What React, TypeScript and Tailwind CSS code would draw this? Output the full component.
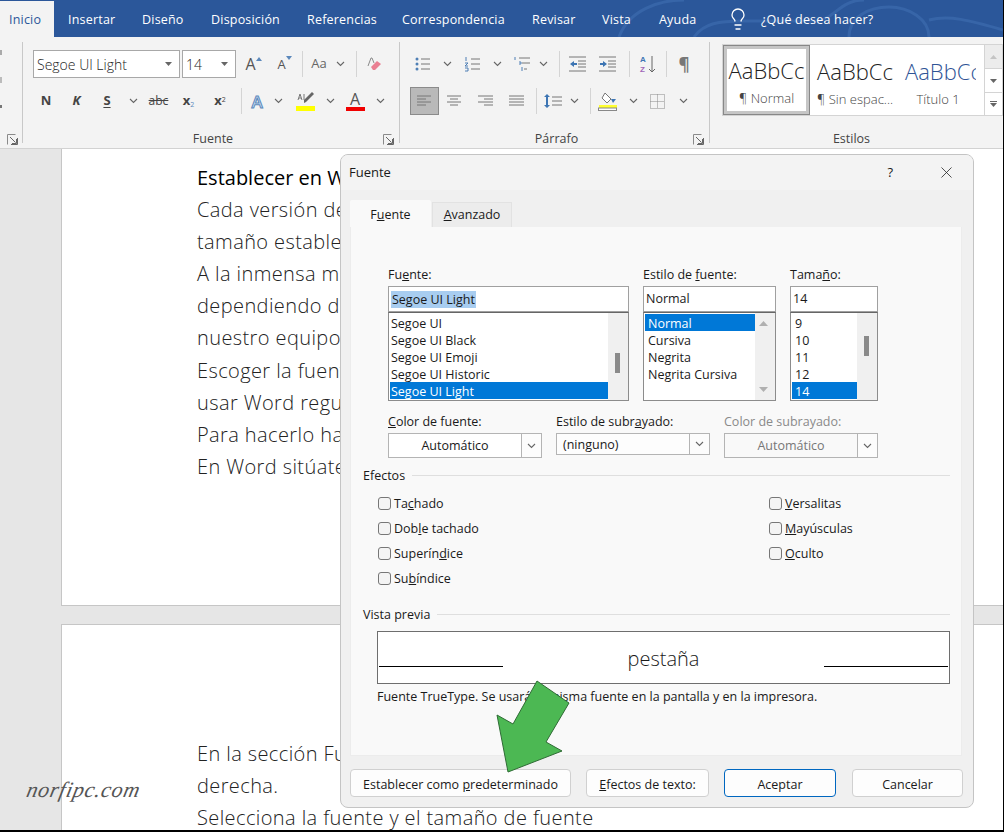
import { ReactNode } from 'react'
import { Lightbulb, X } from 'lucide-react'

const tabs = [
  { label: 'Insertar', w: 'w-[74px]' },
  { label: 'Diseño', w: 'w-[69px]' },
  { label: 'Disposición', w: 'w-[96px]' },
  { label: 'Referencias', w: 'w-[95px]' },
  { label: 'Correspondencia', w: 'w-[130px]' },
  { label: 'Revisar', w: 'w-[70px]' },
  { label: 'Vista', w: 'w-[57px]' },
  { label: 'Ayuda', w: 'w-[70px]' },
]

const page1 = [
  'Cada versión de',
  'tamaño estable',
  'A la inmensa m',
  'dependiendo d',
  'nuestro equipo',
  'Escoger la fuent',
  'usar Word regu',
  'Para hacerlo ha',
  'En Word sitúate',
]

function Chev({ className = '' }: { className?: string }) {
  return (
    <svg width="9" height="6" viewBox="0 0 9 6" className={className}>
      <path d="M1 1l3.5 3.5L8 1" fill="none" stroke="#666" strokeWidth="1.1" />
    </svg>
  )
}

function Cell({ w, children }: { w: string; children?: ReactNode }) {
  return <div className={`flex h-full shrink-0 items-center justify-center ${w}`}>{children}</div>
}

function ChevCell({ w }: { w: string }) {
  return (
    <Cell w={w}>
      <Chev />
    </Cell>
  )
}

function Sep({ w }: { w: string }) {
  return (
    <Cell w={w}>
      <div className="h-[26px] w-px bg-[#d4d4d4]" />
    </Cell>
  )
}

function Launcher() {
  return (
    <svg width="11" height="11" viewBox="0 0 11 11" className="mb-[-2px] shrink-0">
      <path d="M.5 10.5V.5h8" fill="none" stroke="#8a8a8a" />
      <path d="M3 3l5.5 5.5M9.5 5v4.5H5M10.5 4v6.5H4" fill="none" stroke="#666" />
    </svg>
  )
}

function GroupFooter({ label }: { label: string }) {
  return (
    <div className="mt-auto flex h-[22px] items-end pr-[5px]">
      <div className="mb-[-3px] flex-1 pl-[20px] text-center text-[12.5px] leading-[14px] text-[#444]">{label}</div>
      <Launcher />
    </div>
  )
}

// lines drawn for the paragraph icons
function Lines({ d, extra }: { d: string; extra?: ReactNode }) {
  return (
    <svg width="20" height="16" viewBox="0 0 20 16">
      <path d={d} fill="none" stroke="#777" strokeWidth="1" />
      {extra}
    </svg>
  )
}

function Select({ w, text }: { w: string; text: string }) {
  return (
    <div className={`flex h-[28px] shrink-0 items-center justify-between border border-[#a8a8a8] bg-white pl-[3px] pr-[7px] text-[14px] text-[#222] ${w}`}>
      <span className="font-light">{text}</span>
      <svg width="7" height="4" viewBox="0 0 7 4">
        <path d="M0 0h7L3.5 4z" fill="#666" />
      </svg>
    </div>
  )
}

function Ribbon() {
  return (
    <div className="flex h-[112px] shrink-0 border-b border-[#d2d2d2] bg-[#f3f3f3] pb-[5px] pt-[5px]">
      <div className="flex w-[23px] shrink-0 flex-col border-r border-[#c8c8c8]">
        <div className="mt-[8px] flex flex-col gap-[22px]">
          <div className="h-[5px] w-[2px] bg-[#aaa]" />
          <div className="h-[6px] w-[2px] bg-[#bbb]" />
          <div className="h-[3px] w-[2px] bg-[#777]" />
        </div>
        <div className="mt-auto flex justify-end pr-[4px]">
          <Launcher />
        </div>
      </div>

      <div className="flex w-[377px] shrink-0 flex-col border-r border-[#c8c8c8]">
        <div className="ml-[10px] mt-[8px] flex h-[28px] items-center">
          <Select w="w-[147px]" text="Segoe UI Light" />
          <div className="w-[2px] shrink-0" />
          <Select w="w-[54px]" text="14" />
          <Cell w="w-[29px]">
            <span className="relative text-[16px] leading-none text-[#555]">
              A
              <svg width="6" height="4" viewBox="0 0 6 4" className="absolute -right-[6px] top-[1px]">
                <path d="M3 0l3 4H0z" fill="#5b88bb" />
              </svg>
            </span>
          </Cell>
          <Cell w="w-[33px]">
            <span className="relative text-[13px] leading-none text-[#555]">
              A
              <svg width="6" height="4" viewBox="0 0 6 4" className="absolute -right-[6px] -top-[2px]">
                <path d="M3 4l3-4H0z" fill="#5b88bb" />
              </svg>
            </span>
          </Cell>
          <Sep w="w-[8px]" />
          <Cell w="w-[26px]">
            <span className="text-[13px] text-[#666]">Aa</span>
          </Cell>
          <ChevCell w="w-[16px]" />
          <Sep w="w-[16px]" />
          <Cell w="w-[20px]">
            <svg width="16" height="16" viewBox="0 0 16 16">
              <path d="M2 10L5 2h1l2 5" fill="none" stroke="#8a8a8a" />
              <path d="M5 11l6-6 4 3-6 6H7z" fill="#ea7f92" />
            </svg>
          </Cell>
        </div>
        <div className="ml-[8px] mt-[9px] flex h-[28px] items-center text-[13px] text-[#444]">
          <Cell w="w-[30px]"><b>N</b></Cell>
          <Cell w="w-[31px]"><b className="italic">K</b></Cell>
          <Cell w="w-[30px]"><b className="underline underline-offset-2">S</b></Cell>
          <ChevCell w="w-[22px]" />
          <Cell w="w-[29px]"><span className="text-[12px] line-through">abc</span></Cell>
          <Cell w="w-[31px]">
            <b>x<sub className="text-[7px] font-normal text-[#5b88bb]">2</sub></b>
          </Cell>
          <Cell w="w-[32px]">
            <b>x<sup className="text-[7px] font-normal">2</sup></b>
          </Cell>
          <Sep w="w-[10px]" />
          <Cell w="w-[22px]">
            <span className="text-[17px] font-semibold leading-none text-[#cfe2f5] [-webkit-text-stroke:1px_#5b88bb]">A</span>
          </Cell>
          <ChevCell w="w-[20px]" />
          <div className="w-[2px] shrink-0" />
          <Cell w="w-[30px]">
            <div className="flex w-[19px] flex-col items-center">
              <svg width="19" height="13" viewBox="0 0 19 13">
                <path d="M2 8l2-6 2 6M3 6h2M8 2v6" fill="none" stroke="#777" />
                <path d="M8 11l2-1 8-8-2-2-8 8z" fill="#666" />
              </svg>
              <div className="mt-[1px] h-[5px] w-[19px] bg-[#ffff00]" />
            </div>
          </Cell>
          <ChevCell w="w-[20px]" />
          <Cell w="w-[30px]">
            <div className="flex flex-col items-center">
              <span className="text-[16px] leading-[14px] text-[#555]">A</span>
              <div className="mt-[1px] h-[4px] w-[19px] bg-[#f00000]" />
            </div>
          </Cell>
          <ChevCell w="w-[20px]" />
        </div>
        <GroupFooter label="Fuente" />
      </div>

      <div className="flex w-[310px] shrink-0 flex-col border-r border-[#c8c8c8]">
        <div className="ml-[10px] mt-[8px] flex h-[28px] items-center">
          <Cell w="w-[25px]">
            <Lines
              d="M8 3h9M8 8h9M8 13h9"
              extra={
                <g fill="#4f7fb5">
                  <circle cx="4" cy="3" r="1.5" />
                  <circle cx="4" cy="8" r="1.5" />
                  <circle cx="4" cy="13" r="1.5" />
                </g>
              }
            />
          </Cell>
          <ChevCell w="w-[25px]" />
          <Cell w="w-[25px]">
            <Lines
              d="M8 3h9M8 8h9M8 13h9"
              extra={<path d="M3 1v4M2 7h3l-3 3h3M2 12h3v3H2" fill="none" stroke="#4f7fb5" strokeWidth="1" />}
            />
          </Cell>
          <ChevCell w="w-[25px]" />
          <Cell w="w-[23px]">
            <Lines
              d="M7 2h11M10 7h8M12 13h3"
              extra={<path d="M3 1v3M7 6h2v2H7M10 11v4" fill="none" stroke="#4f7fb5" strokeWidth="1" />}
            />
          </Cell>
          <ChevCell w="w-[20px]" />
          <Sep w="w-[12px]" />
          <Cell w="w-[25px]">
            <Lines
              d="M1 1h17M10 5h8M10 8h8M10 11h8M1 15h17"
              extra={<path d="M2 8l4-3v2h3v2H6v2z" fill="#3d75b3" />}
            />
          </Cell>
          <Cell w="w-[36px]">
            <Lines
              d="M1 1h17M10 5h8M10 8h8M10 11h8M1 15h17"
              extra={<path d="M9 8L5 5v2H2v2h3v2z" fill="#3d75b3" />}
            />
          </Cell>
          <Sep w="w-[6px]" />
          <Cell w="w-[32px]">
            <svg width="20" height="20" viewBox="0 0 20 20" className="font-['Liberation_Sans',sans-serif]">
              <text x="2" y="8" fontSize="8" fontWeight="700" fill="#3d75b3">A</text>
              <text x="2" y="18" fontSize="8" fontWeight="700" fill="#a066b8">Z</text>
              <path d="M14 2v16M11 15l3 3 3-3" fill="none" stroke="#666" />
            </svg>
          </Cell>
          <Sep w="w-[4px]" />
          <Cell w="w-[32px]">
            <span className="text-[17px] font-bold leading-none text-[#777]">¶</span>
          </Cell>
        </div>
        <div className="ml-[10px] mt-[9px] flex h-[28px] items-center">
          <Cell w="w-[29px] border border-[#8a8a8a] bg-[#b9b9b9]">
            <Lines d="M2 3h14M2 6h9M2 9h14M2 12h9" />
          </Cell>
          <Cell w="w-[30px]">
            <Lines d="M3 3h14M6 6h8M3 9h14M6 12h8" />
          </Cell>
          <Cell w="w-[32px]">
            <Lines d="M3 3h15M9 6h9M3 9h15M9 12h9" />
          </Cell>
          <Cell w="w-[30px]">
            <Lines d="M3 3h15M3 6h15M3 9h15M3 12h15" />
          </Cell>
          <Sep w="w-[10px]" />
          <Cell w="w-[24px]">
            <Lines
              d="M9 4h10M9 8h10M9 12h10"
              extra={<path d="M4 1l3 3H5v8h2l-3 3-3-3h2V4H1z" fill="#3d75b3" />}
            />
          </Cell>
          <ChevCell w="w-[18px]" />
          <Sep w="w-[14px]" />
          <Cell w="w-[22px]">
            <svg width="20" height="19" viewBox="0 0 20 19">
              <path d="M7 1l6 6-4 4-5-5z" fill="#fff" stroke="#777" />
              <path d="M13 7l5 0-3 4z" fill="#3d75b3" />
              <rect x="1" y="13" width="18" height="3" fill="#ffff30" />
              <rect x=".5" y="16" width="18" height="2.5" fill="#fff" stroke="#888" />
            </svg>
          </Cell>
          <ChevCell w="w-[28px]" />
          <Cell w="w-[20px]">
            <svg width="15" height="15" viewBox="0 0 15 15">
              <path d="M.5.5h14v14H.5zM7.500.5v14M.5 7.500h14" fill="none" stroke="#888" strokeDasharray="1 1" />
            </svg>
          </Cell>
          <ChevCell w="w-[32px]" />
        </div>
        <GroupFooter label="Párrafo" />
      </div>

      <div className="flex min-w-0 flex-1 flex-col">
        <div className="ml-[12px] mt-[2px] flex h-[72px] border border-[#d4d4d4] bg-white">
          <div className="flex w-[87px] shrink-0 flex-col items-center border-[4px] border-[#c6c6c6] outline outline-1 -outline-offset-1 outline-[#888]">
            <div className="mt-[6px] text-[22px] font-light leading-[30px] text-[#222]">AaBbCc</div>
            <div className="mt-[4px] text-[13px] font-light leading-[18px] text-[#444]">¶ Normal</div>
          </div>
          <div className="flex w-[90px] shrink-0 flex-col items-center">
            <div className="mt-[11px] text-[22px] font-light leading-[30px] text-[#222]">AaBbCc</div>
            <div className="mt-[4px] text-[13px] font-light leading-[18px] text-[#444]">¶ Sin espac...</div>
          </div>
          <div className="flex w-[76px] shrink-0 flex-col items-center overflow-hidden">
            <div className="mt-[11px] w-full overflow-hidden whitespace-nowrap pl-[5px] text-[22px] font-light leading-[30px] text-[#2f5496]">AaBbCc</div>
            <div className="mt-[4px] text-[13px] font-light leading-[18px] text-[#444]">Título 1</div>
          </div>
          <div className="ml-auto flex w-[18px] shrink-0 flex-col border-l border-[#d4d4d4]">
            <div className="flex h-[24px] items-center justify-center border-b border-[#d4d4d4] bg-[#ececec]">
              <svg width="7" height="4" viewBox="0 0 7 4"><path d="M3.5 0L7 4H0z" fill="#c4c4c4" /></svg>
            </div>
            <div className="flex h-[24px] items-center justify-center border-b border-[#d4d4d4]">
              <svg width="7" height="4" viewBox="0 0 7 4"><path d="M3.5 4L7 0H0z" fill="#666" /></svg>
            </div>
            <div className="flex flex-1 flex-col items-center justify-center gap-[1px]">
              <div className="h-px w-[7px] bg-[#666]" />
              <svg width="7" height="4" viewBox="0 0 7 4"><path d="M3.5 4L7 0H0z" fill="#666" /></svg>
            </div>
          </div>
        </div>
        <div className="mb-[-3px] mt-auto pr-[10px] text-center text-[12.5px] leading-[14px] text-[#444]">Estilos</div>
      </div>
    </div>
  )
}

function Label({ children, muted }: { children: ReactNode; muted?: boolean }) {
  return <div className={`mb-[4px] h-[15px] pt-px leading-[14px] ${muted ? 'text-[#8a8a8a]' : ''}`}>{children}</div>
}

function Field({ children }: { children?: ReactNode }) {
  return <div className="flex h-[26px] w-full items-center border border-[#a0a0a0] bg-white px-[2px]">{children}</div>
}

function ListRow({ text, on, pl }: { text: string; on?: boolean; pl: string }) {
  return (
    <div className={`h-[17px] whitespace-nowrap leading-[19px] ${pl} ${on ? 'bg-[#0078d7] text-white' : ''}`}>{text}</div>
  )
}

function ListBox({ children, bar }: { children: ReactNode; bar: ReactNode }) {
  return (
    <div className="flex h-[89px] overflow-hidden border border-[#8c8c8c] border-t-[#666] bg-white pl-[1px]">
      <div className="flex-1 pt-[1px]">{children}</div>
      <div className="relative w-[20px] shrink-0 bg-[#f0f0f0]">{bar}</div>
    </div>
  )
}

function Combo({ label, text, disabled, h, center }: { label: ReactNode; text: string; disabled?: boolean; h: string; center?: boolean }) {
  return (
    <div className="w-[154px] shrink-0">
      <Label muted={disabled}>{label}</Label>
      <div className={`flex items-stretch border border-[#b4b4b4] ${h} ${disabled ? 'bg-[#f9f9f9] text-[#777]' : center ? 'bg-white' : 'bg-[#fdfdfd]'}`}>
        <div className={`flex flex-1 items-center ${center ? 'justify-center pt-px' : 'pl-[6px] pt-[3px]'}`}>{text}</div>
        <div className="flex w-[20px] items-center justify-center border-l border-[#b4b4b4] bg-[#fcfcfc]">
          <Chev />
        </div>
      </div>
    </div>
  )
}

function Check({ children }: { children: ReactNode }) {
  return (
    <div className="flex h-[25px] items-center">
      <div className="h-[13px] w-[13px] rounded-[3px] border border-[#777] bg-[#f4f4f4]" />
      <span className="ml-[3px] pt-[2px]">{children}</span>
    </div>
  )
}

function Heading({ text }: { text: string }) {
  return (
    <div className="ml-[12px] mr-[11px] flex h-[14px] items-center gap-[7px] leading-[14px]">
      <span className="pt-[2px]">{text}</span>
      <div className="h-px flex-1 bg-[#dfdfdf]" />
    </div>
  )
}

function Btn({ w, children, primary }: { w: string; children: ReactNode; primary?: boolean }) {
  return (
    <div className={`flex h-[28px] shrink-0 items-center justify-center rounded-[4px] border bg-[#fdfdfd] pt-[4px] ${w} ${primary ? 'border-[#0067c0]' : 'border-[#d0d0d0]'}`}>
      <span>{children}</span>
    </div>
  )
}

function Dialog() {
  return (
    <div className="absolute left-[340px] top-[154px] h-[654px] w-[634px] overflow-hidden rounded-[8px] border border-[#c4c4c4] bg-[#f0f0f0] text-[12.5px] text-[#1a1a1a]">
      <div className="flex h-[35px] items-center bg-[#f3f3f3] pl-[8px] pr-[17px]">
        <span className="flex-1 text-[13px]">Fuente</span>
        <span className="mr-[44px] text-[13px]">?</span>
        <X size={19} strokeWidth={1} color="#222" />
      </div>
      <div className="flex h-[37px] items-end pl-[9px]">
        <div className="flex h-[27px] w-[81px] items-center justify-center rounded-t-[2px] bg-[#f9f9f9] pt-[3px]">
          <span>F<u>u</u>ente</span>
        </div>
        <div className="ml-px flex h-[25px] w-[80px] items-center justify-center border border-b-0 border-[#e2e2e2] bg-[#ececec] pt-px">
          <span><u>A</u>vanzado</span>
        </div>
      </div>
      <div className="ml-[9px] h-[529px] w-[612px] border border-t-0 border-[#ececec] bg-[#f9f9f9]">
        <div className="ml-[37px] flex gap-[14px] pt-[40px]">
          <div className="w-[241px] shrink-0">
            <Label>Fu<u>e</u>nte:</Label>
            <Field>
              <span className="bg-[#a8cdf0] px-px leading-[17px]">Segoe UI Light</span>
            </Field>
            <ListBox bar={<div className="absolute left-[7px] top-[40px] h-[20px] w-[5px] bg-[#8a8a8a]" />}>
              <ListRow pl="pl-[1px]" text="Segoe UI" />
              <ListRow pl="pl-[1px]" text="Segoe UI Black" />
              <ListRow pl="pl-[1px]" text="Segoe UI Emoji" />
              <ListRow pl="pl-[1px]" text="Segoe UI Historic" />
              <ListRow pl="pl-[1px]" on text="Segoe UI Light" />
            </ListBox>
          </div>
          <div className="w-[133px] shrink-0">
            <Label>Estilo de <u>f</u>uente:</Label>
            <Field>Normal</Field>
            <ListBox
              bar={
                <>
                  <svg width="9" height="5" viewBox="0 0 9 5" className="absolute left-[4px] top-[8px]"><path d="M4.5 0L9 5H0z" fill="#b0b0b0" /></svg>
                  <svg width="9" height="5" viewBox="0 0 9 5" className="absolute bottom-[8px] left-[4px]"><path d="M4.5 5L9 0H0z" fill="#b0b0b0" /></svg>
                </>
              }
            >
              <ListRow pl="pl-[3px]" on text="Normal" />
              <ListRow pl="pl-[3px]" text="Cursiva" />
              <ListRow pl="pl-[3px]" text="Negrita" />
              <ListRow pl="pl-[3px]" text="Negrita Cursiva" />
            </ListBox>
          </div>
          <div className="w-[88px] shrink-0">
            <Label>Tama<u>ñ</u>o:</Label>
            <Field>14</Field>
            <ListBox bar={<div className="absolute left-[7px] top-[23px] h-[20px] w-[5px] bg-[#8a8a8a]" />}>
              <ListRow pl="pl-[3px]" text="9" />
              <ListRow pl="pl-[3px]" text="10" />
              <ListRow pl="pl-[3px]" text="11" />
              <ListRow pl="pl-[3px]" text="12" />
              <ListRow pl="pl-[3px]" on text="14" />
            </ListBox>
          </div>
        </div>

        <div className="ml-[37px] mt-[13px] flex h-[44px] items-start gap-[14px]">
          <Combo label={<><u>C</u>olor de fuente:</>} text="Automático" h="h-[25px]" center />
          <Combo label={<>Estilo de subr<u>a</u>yado:</>} text="(ninguno)" h="h-[22px]" />
          <Combo label="Color de subrayado:" text="Automático" h="h-[25px]" disabled center />
        </div>

        <div className="mt-[10px]">
          <Heading text="Efectos" />
        </div>
        <div className="mt-[9px] grid grid-cols-[391px_1fr] pl-[27px]">
          <div>
            <Check>Ta<u>c</u>hado</Check>
            <Check>Dob<u>l</u>e tachado</Check>
            <Check>Superín<u>d</u>ice</Check>
            <Check>Su<u>b</u>índice</Check>
          </div>
          <div>
            <Check><u>V</u>ersalitas</Check>
            <Check><u>M</u>ayúsculas</Check>
            <Check><u>O</u>culto</Check>
          </div>
        </div>

        <div className="mt-[16px]">
          <Heading text="Vista previa" />
        </div>
        <div className="ml-[26px] mr-[11px] mt-[10px] flex h-[53px] items-end justify-between border border-[#6e6e6e] bg-white px-px pb-[16px]">
          <div className="h-px w-[124px] bg-black" />
          <span className="-mb-[5px] text-[20px] font-light leading-[26px]">pestaña</span>
          <div className="h-px w-[124px] bg-black" />
        </div>
        <div className="ml-[26px] mt-[6px] leading-[14px]">
          Fuente TrueType. Se usará la misma fuente en la pantalla y en la impresora.
        </div>
      </div>
      <div className="ml-[9px] mt-[13px] flex">
        <Btn w="w-[221px]">Establecer como <u>p</u>redeterminado</Btn>
        <div className="w-[15px] shrink-0" />
        <Btn w="w-[123px]"><u>E</u>fectos de texto:</Btn>
        <div className="w-[15px] shrink-0" />
        <Btn w="w-[112px]" primary>Aceptar</Btn>
        <div className="w-[16px] shrink-0" />
        <Btn w="w-[111px]">Cancelar</Btn>
      </div>
    </div>
  )
}

export default function App() {
  return (
    <div className="relative flex h-[832px] w-[1004px] flex-col overflow-hidden border-b-2 border-r border-black bg-[#e6e6e6] font-['Open_Sans','Liberation_Sans',sans-serif]">
      <div className="relative flex h-[37px] shrink-0 items-center overflow-hidden bg-[#2b579a] text-[12.5px] tracking-[0.2px] text-white">
        <svg width="404" height="37" viewBox="0 0 404 37" className="absolute right-0 top-0">
          <path
            d="M20 37C30 10 60 0 85 0M95 37c10-14 25-16 50-16h70c20 0 25-21 50-21M250 37c0-20 20-30 40-30s40 12 40 30M330 20c20-5 40 0 74 10"
            fill="none"
            stroke="#3765a8"
            strokeWidth="3"
          />
        </svg>
        <div className="relative mt-px flex h-[36px] w-[54px] shrink-0 items-center bg-[#f3f3f3] pl-[9px] pt-[2px] text-[#2b579a]">Inicio</div>
        <div className="relative flex h-full items-center pl-[14px] pt-[3px]">
          {tabs.map((t) => (
            <div key={t.label} className={`shrink-0 ${t.w}`}>{t.label}</div>
          ))}
          <Lightbulb size={24} strokeWidth={1.3} className="-ml-[3px] -mt-[3px]" />
          <span className="ml-[11px]">¿Qué desea hacer?</span>
        </div>
      </div>

      <Ribbon />

      <div className="flex min-h-0 flex-1 flex-col gap-[18px] pl-[61px]">
        <div className="h-[457px] shrink-0 border-b border-l border-[#c6c6c6] bg-white pl-[135px] pt-[13px] text-[20px] font-light leading-[32.1px] tracking-[0.4px] text-[#222]">
          <div className="font-normal tracking-normal text-black">Establecer en W</div>
          {page1.map((l) => (
            <div key={l}>{l}</div>
          ))}
        </div>
        <div className="flex-1 border-l border-t border-[#c6c6c6] bg-white pl-[135px] pt-[113px] text-[20px] font-light leading-[32.2px] tracking-[0.4px] text-[#222]">
          <div>En la sección Fu</div>
          <div>derecha.</div>
          <div>Selecciona la fuente y el tamaño de fuente</div>
        </div>
      </div>

      <Dialog />

      <svg width="80" height="96" viewBox="0 0 80 96" className="absolute left-[494px] top-[679px]">
        <path d="M43 2L75 24 52 63 68 72 14 93 3 36 19 45z" fill="#4cb853" stroke="#2f6b35" strokeWidth="1" />
      </svg>

      <div className="absolute left-[27px] top-[773px] origin-left -skew-x-12 font-['Liberation_Serif',serif] text-[22px] italic tracking-[0.7px] text-[#555]">
        norfipc.com
      </div>
    </div>
  )
}
